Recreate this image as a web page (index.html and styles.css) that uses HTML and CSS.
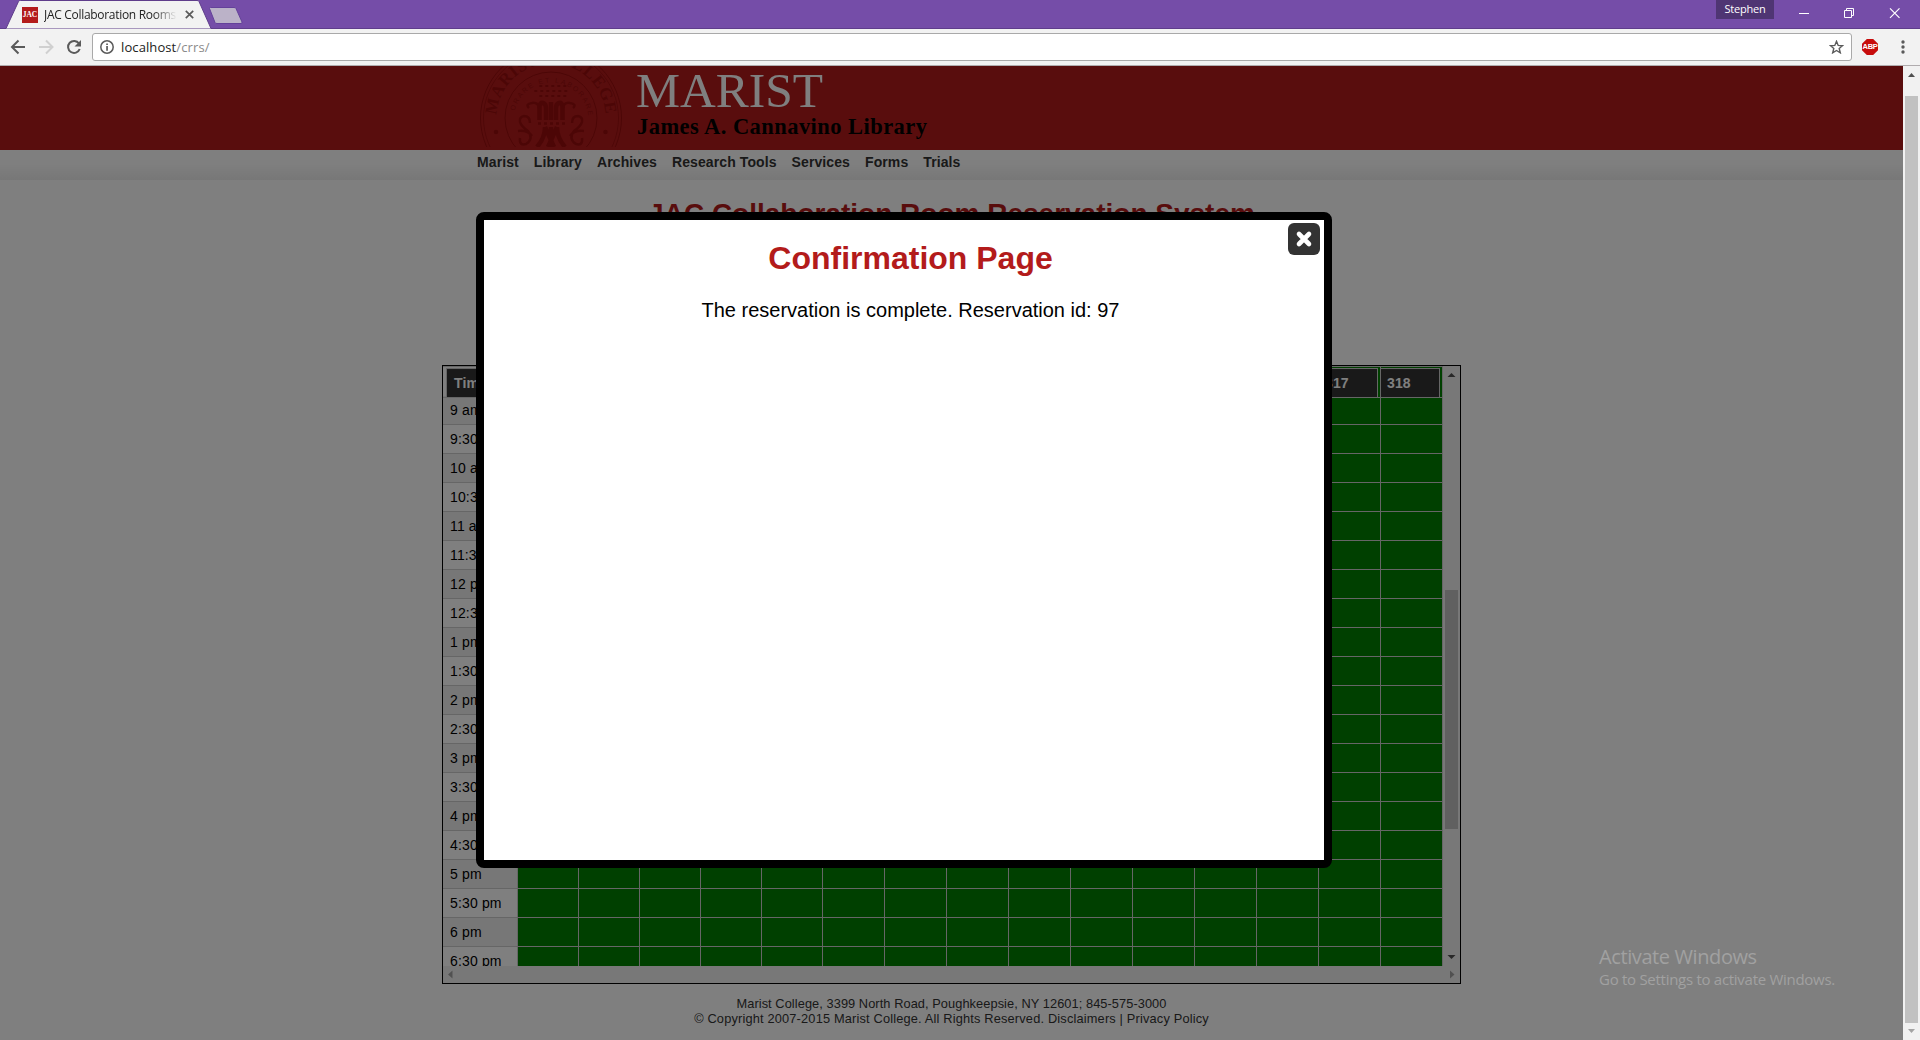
FILE: index.html
```html
<!DOCTYPE html>
<html lang="en">
<head>
<meta charset="utf-8">
<title>JAC Collaboration Rooms</title>
<link rel="stylesheet" href="styles.css">
</head>
<body>
<div class="browser">
  <div class="titlebar">
    <svg class="tab-shape" width="250" height="29" viewBox="0 0 250 29">
      <path d="M6 28.5 L18.5 1.5 Q19 .5 20.500 .5 H197 Q198.500 .5 199 1.500 L211 28.5" fill="#f2f2f2" stroke="#5f3d8b"/>
      <path d="M209.500 8.500 Q209 7.500 210.500 7.500 H234 Q235.500 7.500 236 8.500 L242 22 Q242.500 23.500 241 23.500 H217 Q215.500 23.500 215 22.500 Z" fill="#bbb2c8" stroke="#64419a"/>
    </svg>
    <div class="tab">
      <span class="favicon">JAC</span>
      <span class="tab-title">JAC Collaboration Rooms</span>
      <svg class="tab-close" width="9" height="9" viewBox="0 0 9 9"><path d="M.8 .8 L8.200 8.200 M8.200 .8 L.8 8.200" stroke="#5a5a5a" stroke-width="1.700"/></svg>
    </div>
    <div class="window-controls">
      <span class="profile">Stephen</span>
      <svg width="128" height="28" viewBox="0 0 128 28" fill="none" stroke="#fff">
        <path d="M8 13.500 H18"/>
        <path d="M53.500 10.500 H60.500 V17.500 H53.500 Z M55.500 10.500 V8.500 H62.500 V15.500 H60.500"/>
        <path d="M99 8.300 L108.500 17.800 M108.500 8.300 L99 17.800" stroke-width="1.200"/>
      </svg>
    </div>
  </div>
  <div class="toolbar">
    <svg class="nav-icons" width="92" height="36" viewBox="0 0 92 36" fill="none" stroke-width="2">
      <path d="M25 18 H12.500 M18.500 11.500 L12 18 L18.500 24.500" stroke="#5a5a5a"/>
      <path d="M39 18 H51.500 M46 11.500 L52.500 18 L46 24.500" stroke="#d0d0d0"/>
      <path d="M79 14.500 A6 6 0 1 0 79.700 20" stroke="#5a5a5a"/>
      <path d="M81 11 V17.500 H74.500 Z" fill="#5a5a5a"/>
    </svg>
    <div class="omnibox">
      <svg width="14" height="14" viewBox="0 0 14 14"><circle cx="7" cy="7" r="6.200" fill="none" stroke="#5a5a5a" stroke-width="1.500"/><path d="M6.200 3.400 H7.900 V5 H6.200 Z M6.200 6 H7.900 V10.700 H6.200 Z" fill="#5a5a5a"/></svg>
      <span class="url">localhost<span class="url-path">/crrs/</span></span>
      <svg class="star" width="15" height="14" viewBox="0 0 15 14"><path d="M7.500 1.300 L9.200 5.400 L13.500 5.700 L10.200 8.500 L11.300 12.800 L7.500 10.500 L3.700 12.800 L4.800 8.500 L1.500 5.700 L5.800 5.400 Z" fill="none" stroke="#5a5a5a" stroke-width="1.400"/></svg>
    </div>
    <span class="abp">ABP</span>
    <svg class="kebab" width="4" height="14" viewBox="0 0 4 14" fill="#5a5a5a"><circle cx="2" cy="2" r="1.700"/><circle cx="2" cy="7" r="1.700"/><circle cx="2" cy="12" r="1.700"/></svg>
  </div>

  <div class="viewport">
    <div class="page">
      <header class="banner">
        <svg class="seal" width="146" height="81" viewBox="0 0 146 81" fill="none" stroke="#980d0d">
          <defs>
            <path id="arc-name" d="M18.500 52 A54.500 54.500 0 1 1 127.500 52"/>
            <path id="arc-motto" d="M36 48 A37.500 37.500 0 0 1 110 48"/>
          </defs>
          <circle cx="73" cy="52" r="70.500"/>
          <circle cx="73" cy="52" r="67.500" stroke-width=".8"/>
          <circle cx="73" cy="52" r="46"/>
          <text class="seal-name"><textPath href="#arc-name" startOffset="3" textLength="164">MARIST COLLEGE</textPath></text>
          <text class="seal-motto"><textPath href="#arc-motto" startOffset="3" textLength="104">ORARE ET LABORARE</textPath></text>
          <g fill="#980d0d" stroke="none"><circle cx="18" cy="66" r="2.300"/><circle cx="127.500" cy="66" r="2.300"/></g>
          <g stroke-width="1.800" stroke-dasharray="1.600 4.400" stroke-linecap="round">
            <path d="M62 20 H88"/><path d="M57 25 H92"/><path d="M62 30 H88"/>
          </g>
          <g stroke-width="4.500">
            <path d="M61.500 54 V41 Q62 36 65 37 Q68 38 68 42 V54"/>
            <path d="M73 36 V54"/>
            <path d="M84.500 54 V41 Q84 36 81 37 Q78 38 78 42 V54"/>
            <path d="M67 61 Q67 72 59 81 M67 61 L76 81 M73 61 V81 M79 61 L70 81 M79 61 Q79 72 87 81"/>
          </g>
          <g stroke-width="2.500">
            <path d="M61 42 Q60 36 54 37 Q47 38 51 42"/><path d="M85 42 Q86 36 92 37 Q99 38 95 42"/>
            <path d="M52 57 Q52 50 46 50 Q41 51 42 56 Q43 60 50 65 Q56 73 48 78 Q41 80 42 72 M40 65 Q50 64 54 70"/>
            <path d="M94 57 Q94 50 100 50 Q105 51 104 56 Q103 60 96 65 Q90 73 98 78 Q105 80 104 72 M106 65 Q96 64 92 70"/>
            <path d="M60 57.500 H89" stroke-dasharray="3 3"/>
          </g>
        </svg>
        <svg class="wordmark" width="300" height="84" viewBox="0 0 300 84">
          <text class="mark-name" x="0" y="40.500" textLength="187" lengthAdjust="spacingAndGlyphs">MARIST</text>
          <text class="mark-library" x="1" y="68" textLength="290" lengthAdjust="spacing">James A. Cannavino Library</text>
        </svg>
      </header>
      <nav class="menu">
        <a>Marist</a><a>Library</a><a>Archives</a><a>Research Tools</a><a>Services</a><a>Forms</a><a>Trials</a>
      </nav>
      <h1 class="page-title">JAC Collaboration Room Reservation System</h1>
      <div class="schedule">
        <div class="grid" id="grid"></div>
        <div class="vbar">
          <svg width="17" height="17" viewBox="0 0 17 17"><path d="M4.500 11 L8.500 7 L12.500 11 Z" fill="#505050"/></svg>
          <div class="vthumb"></div>
          <svg width="17" height="17" viewBox="0 0 17 17"><path d="M4.500 6 L8.500 10 L12.500 6 Z" fill="#505050"/></svg>
        </div>
        <div class="hbar">
          <svg width="17" height="17" viewBox="0 0 17 17"><path d="M9.500 4.500 L5 8.500 L9.500 12.500 Z" fill="#a3a3a3"/></svg>
          <svg width="17" height="17" viewBox="0 0 17 17"><path d="M7 4.500 L11.500 8.500 L7 12.500 Z" fill="#a3a3a3"/></svg>
        </div>
      </div>
      <footer class="footer">
        <div>Marist College, 3399 North Road, Poughkeepsie, NY 12601; 845-575-3000</div>
        <div class="copyright">© Copyright 2007-2015 Marist College. All Rights Reserved. Disclaimers | Privacy Policy</div>
      </footer>
      <div class="scrim"></div>
      <div class="modal">
        <h2>Confirmation Page</h2>
        <p>The reservation is complete. Reservation id: 97</p>
        <svg class="modal-close" width="32" height="32" viewBox="0 0 32 32"><rect width="32" height="32" rx="6" fill="#333"/><path d="M11 11 L21 21 M21 11 L11 21" stroke="#fff" stroke-width="4.600" stroke-linecap="round"/></svg>
      </div>
      <div class="watermark">
        <div class="wm-title">Activate Windows</div>
        <div class="wm-text">Go to Settings to activate Windows.</div>
      </div>
    </div>
    <div class="scrollbar">
      <svg width="17" height="17" viewBox="0 0 17 17"><path d="M5 11 L8.500 7 L12 11 Z" fill="#505050"/></svg>
      <div class="thumb"></div>
      <svg width="17" height="17" viewBox="0 0 17 17"><path d="M5 6 L8.500 10 L12 6 Z" fill="#a3a3a3"/></svg>
    </div>
  </div>
</div>
<script src="grid.js"></script>
</body>
</html>
```
FILE: styles.css
```css
* { box-sizing: border-box; }
body { margin: 0; font-family: "Liberation Sans", Arial, sans-serif; overflow: hidden; }
svg { display: block; flex: none; }
.browser { width: 1920px; height: 1040px; display: flex; flex-direction: column; }

.titlebar { position: relative; height: 29px; background: #754da8; border-bottom: 1px solid #5f3d8b; display: flex; justify-content: space-between; font-family: "Open Sans", sans-serif; }
.tab-shape { position: absolute; left: 0; top: 0; }
.tab { position: relative; display: flex; align-items: center; width: 211px; height: 29px; padding-left: 22px; }
.favicon { width: 16px; height: 16px; background: #b31b1b; color: #fff; font: bold 7.5px/16px "Liberation Serif", serif; text-align: center; }
.tab-title { width: 133px; margin-left: 6px; overflow: hidden; white-space: nowrap; font-size: 12px; letter-spacing: -.3px; color: #222; -webkit-mask-image: linear-gradient(90deg, #000 82%, transparent); mask-image: linear-gradient(90deg, #000 82%, transparent); }
.tab-close { margin-left: 8px; }
.window-controls { display: flex; align-items: flex-start; gap: 17px; }
.window-controls svg { margin-right: 1px; }
.profile { width: 58px; height: 19px; background: #4f3573; color: #fff; font-size: 11px; line-height: 18px; text-align: center; letter-spacing: -.2px; }

.toolbar { height: 37px; background: #f2f2f2; border-bottom: 1px solid #b0acae; display: flex; align-items: center; font-family: "Open Sans", sans-serif; }
.omnibox { width: 1760px; height: 28px; background: #fff; border: 1px solid #a9a9a9; border-radius: 3px; display: flex; align-items: center; padding: 0 7px; }
.url { flex: 1; margin-left: 7px; font-size: 13px; letter-spacing: .1px; color: #222; }
.url-path { color: #8a8a8a; }
.abp { width: 16px; height: 16px; margin-left: 10px; background: #c70d0d; clip-path: polygon(30% 0, 70% 0, 100% 30%, 100% 70%, 70% 100%, 30% 100%, 0 70%, 0 30%); color: #fff; font: bold 7.5px/16px "Liberation Sans", sans-serif; text-align: center; letter-spacing: -.3px; }
.kebab { margin-left: 23px; }

.viewport { flex: 1; display: flex; min-height: 0; }
.page { position: relative; width: 1903px; overflow: hidden; background: #fff; }
.scrollbar { width: 17px; background: #f1f1f1; display: flex; flex-direction: column; }
.thumb { flex: 1; margin: 13px 2px 0; background: #c1c1c1; }

.banner { height: 84px; background: #b31b1b; display: flex; padding-left: 478px; }
.seal { font-family: "Liberation Serif", serif; }
.seal-name { font-size: 17px; font-weight: bold; fill: #980d0d; stroke: none; }
.seal-motto { font: 7px "Liberation Sans", sans-serif; fill: #980d0d; stroke: none; }
.wordmark { margin-left: 12px; font-family: "Liberation Serif", serif; }
.mark-name { font-size: 49px; fill: #fff; }
.mark-library { font-size: 22.5px; font-weight: bold; fill: #000; }

.menu { height: 30px; background: linear-gradient(#fff 45%, #efefef); display: flex; gap: 15px; padding: 4px 0 0 477px; font-size: 14px; line-height: 17px; font-weight: bold; letter-spacing: .1px; color: #333; }
.page-title { height: 32px; margin: 18px 0 0; text-align: center; font-size: 28px; line-height: 32px; color: #b31b1b; }

.schedule { width: 1019px; height: 619px; margin: 135px 0 0 442px; border: 1px solid #000; display: grid; grid-template: 600px 17px / 1000px 17px; }
.grid { overflow: hidden; font-size: 14px; letter-spacing: .15px; color: #000; }
.row { display: grid; grid-template-columns: 75px repeat(5, 61px) repeat(10, 62px); height: 29px; }
.label, .slot { border-right: 1px solid #ccc; border-bottom: 1px solid #ccc; }
.label { padding-left: 7px; line-height: 28px; }
.row:nth-child(even) .label { background: #efefef; }
.slot { background: #008000; }
.row.head { height: 30px; position: relative; border-top: 1px solid #ccc; }
.head-cell { position: relative; top: 1px; left: -1px; width: calc(100% - 1px); height: 30px; background: #333; border: 1px solid #ccc; color: #fff; font-weight: bold; line-height: 29px; padding-left: 6px; }
.head .label { padding-left: 3px; }
.label .head-cell { left: 0; width: 70px; padding-left: 7px; }
.vbar { background: #f1f1f1; display: flex; flex-direction: column; justify-content: space-between; }
.vthumb { height: 239px; width: 13px; margin: 207px auto auto 2px; background: #c1c1c1; }
.hbar { grid-column: 1 / 3; background: #f1f1f1; display: flex; justify-content: space-between; }

.footer { margin-top: 12px; text-align: center; font-size: 12.8px; line-height: 15px; letter-spacing: .07px; color: #333; }
.copyright { letter-spacing: .17px; }

.scrim { position: absolute; inset: 0; background: rgba(0, 0, 0, .5); }
.modal { position: absolute; left: 476px; top: 146px; width: 856px; height: 656px; background: #fff; border: 8px solid #000; border-radius: 8px; padding-left: 13px; text-align: center; }
.modal h2 { margin: 20px 0 0; font-size: 32px; line-height: 37px; color: #b31b1b; }
.modal p { margin: 22px 0 0; font-size: 20px; line-height: 23px; color: #000; }
.modal-close { position: absolute; right: 4px; top: 3px; }
.watermark { position: absolute; left: 1599px; top: 877px; font-family: "Open Sans", sans-serif; color: #a1a1a1; white-space: nowrap; }
.wm-title { font-size: 20px; line-height: 28px; letter-spacing: -.4px; }
.wm-text { font-size: 15px; line-height: 17px; letter-spacing: -.28px; }
```
FILE: grid.js
```js
const rooms = Array(15).fill("");
rooms[13] = "317";
rooms[14] = "318";

const grid = document.getElementById("grid");

function addRow(label, cells, className) {
  const row = document.createElement("div");
  row.className = className;
  row.innerHTML = `<div class="label">${label}</div>` +
    cells.map((cell) => `<div class="slot">${cell}</div>`).join("");
  grid.append(row);
}

const head = (text) => `<div class="head-cell">${text}</div>`;
addRow(head("Time"), rooms.map(head), "row head");

for (let half = 18; half < 38; half++) {
  const hour = Math.floor(half / 2);
  const label = `${hour > 12 ? hour - 12 : hour}${half % 2 ? ":30" : ""} ${hour < 12 ? "am" : "pm"}`;
  addRow(label, Array(15).fill(""), "row");
}
```
